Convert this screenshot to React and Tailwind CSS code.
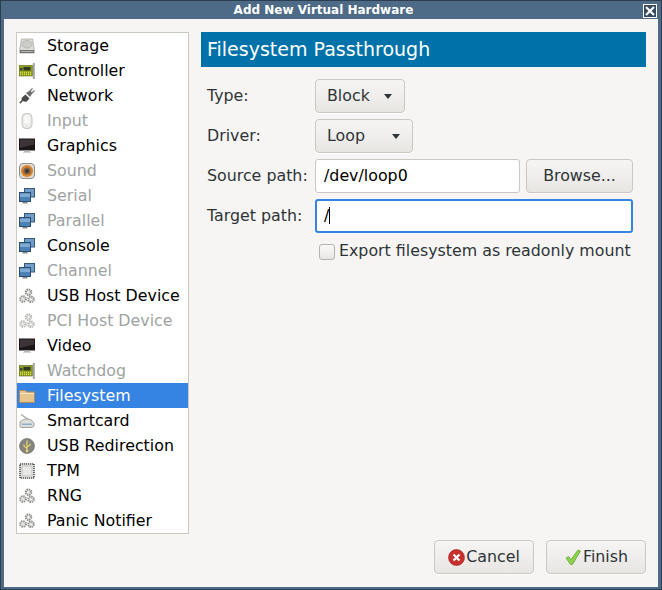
import React from 'react';

const HardDisk = () => (
  <svg width="16" height="16" viewBox="0 0 16 16">
    <path d="M2.5 1l11 0 1.8 10.5v3.5H.7v-3.5z" fill="#dcdcd9" stroke="#a8a8a5" strokeWidth="0.8" />
    <ellipse cx="8" cy="6.3" rx="5" ry="3.8" fill="#cbcbc8" stroke="#b4b4b1" strokeWidth="0.8" />
    <rect x="1" y="12" width="14" height="3" fill="#6f6f6c" />
    <rect x="2" y="13" width="12" height="1" fill="#b5b5b2" />
  </svg>
);

const Card = () => (
  <svg width="16" height="16" viewBox="0 0 16 16">
    <rect x="0" y="2.5" width="13.5" height="10.5" fill="#8b9a22" stroke="#5c6614" strokeWidth="0.6" />
    <rect x="4.5" y="4" width="7" height="3.5" fill="#2e3a20" />
    <rect x="1" y="5" width="2.5" height="2.5" fill="#3c4a3c" />
    <path d="M1 9.5h11.5M1 11.5h11.5" stroke="#dbe04a" strokeWidth="1.4" strokeDasharray="1 1" />
    <rect x="13.8" y="0" width="2" height="16" fill="#a5a5a2" />
  </svg>
);

const Plug = () => (
  <svg width="16" height="16" viewBox="0 0 16 16">
    <path d="M0.8 15.2l3-3.2" stroke="#5a5a58" strokeWidth="1.8" />
    <path d="M3 9.5l3.5-3 4 4-3 3.2q-2.5 .3-4.2-1.2t-.3-3z" fill="#4a4a48" />
    <path d="M7 5l4-2.5 2.5 2.5-2.5 4z" fill="#6a6a68" />
    <path d="M11 3l2.5-2.5M13 5l2.5-2.5" stroke="#7a7a78" strokeWidth="1.4" />
  </svg>
);

const Mouse = () => (
  <svg width="16" height="16" viewBox="0 0 16 16">
    <rect x="3" y="0.5" width="10" height="15" rx="4" fill="#ebebe8" stroke="#c4c4c1" />
    <rect x="5" y="2" width="6" height="9" rx="3" fill="#f8f8f7" />
  </svg>
);

const Monitor = () => (
  <svg width="16" height="16" viewBox="0 0 16 16">
    <rect x="0" y="0.5" width="16" height="12" fill="#1b1618" />
    <path d="M1 1.5h14v5L1 10z" fill="#3d3438" />
    <rect x="5" y="12.5" width="6" height="1.5" fill="#b5b5b2" />
    <rect x="4" y="14" width="8" height="1" fill="#d2d2cf" />
  </svg>
);

const Speaker = () => (
  <svg width="16" height="16" viewBox="0 0 16 16">
    <rect x="0.5" y="0.5" width="15" height="15" rx="3.5" fill="#dfdcd6" stroke="#8e8e8a" />
    <circle cx="8" cy="8" r="6" fill="#d8802a" />
    <circle cx="8" cy="8" r="3.6" fill="#75614c" />
    <circle cx="8" cy="8" r="1.7" fill="#3a3028" />
  </svg>
);

const Computers = () => (
  <svg width="16" height="16" viewBox="0 0 16 16">
    <rect x="5.5" y="0.5" width="10" height="8.5" fill="#6f9cc8" stroke="#38587a" />
    <rect x="0.5" y="4.5" width="11" height="9" fill="#4a82b8" stroke="#2c4d70" />
    <path d="M1 5.5h10v3.5H1z" fill="#7faad2" />
    <rect x="3.5" y="14" width="5" height="1.5" fill="#8a8a88" />
  </svg>
);

const Gears = ({ faint }) => {
  const tone = faint ? '#b5b5b2' : '#8e8e8b';
  const gear = (cx, cy, key) => (
    <g key={key}>
      <circle cx={cx} cy={cy} r="2.7" fill="none" stroke={tone} strokeWidth="2.2" strokeDasharray="1.4 0.7" />
      <circle cx={cx} cy={cy} r="1.3" fill="#fff" stroke="#c0c0bd" strokeWidth="0.6" />
    </g>
  );
  return (
    <svg width="16" height="16" viewBox="0 0 16 16">
      {gear(9.5, 4.2, 'a')}
      {gear(4, 11, 'b')}
      {gear(12, 11.3, 'c')}
    </svg>
  );
};

const Folder = () => (
  <svg width="16" height="16" viewBox="0 0 16 16">
    <path d="M0.5 3.5V2.5h6l1 1.5h8v10.5H0.5z" fill="#e8c48e" stroke="#ab8a5c" />
    <rect x="1" y="5" width="14" height="1" fill="#f8e8c8" />
  </svg>
);

const Scanner = () => (
  <svg width="16" height="16" viewBox="0 0 16 16">
    <path d="M2 1.5l9 6" stroke="#a5a5a2" strokeWidth="1.2" />
    <path d="M1 9q5-5 11-2l3 3v3q-1 1.5-3 1.5H3q-2 0-2-1.5z" fill="#dededb" stroke="#a0a09d" />
    <rect x="3" y="10.5" width="10" height="1.5" fill="#8fb0cc" />
  </svg>
);

const UsbDisc = () => (
  <svg width="16" height="16" viewBox="0 0 16 16">
    <circle cx="8" cy="8" r="7.5" fill="#85857f" stroke="#66665f" strokeWidth="0.6" />
    <path d="M8 2.5v11M8 10.5L5 8V6.5M8 9l3-2V5.5" fill="none" stroke="#ecd26a" strokeWidth="1.2" />
    <circle cx="8" cy="13" r="1.3" fill="#ecd26a" />
  </svg>
);

const Chip = () => (
  <svg width="16" height="16" viewBox="0 0 16 16">
    <rect x="1" y="1" width="14" height="14" fill="none" stroke="#4f4f4d" strokeWidth="1.6" strokeDasharray="1.3 0.7" />
    <rect x="2" y="2" width="12" height="12" rx="1" fill="#d4d4d1" />
    <rect x="4" y="4" width="8" height="8" fill="#e8e8e6" />
  </svg>
);

const devices = [
  { name: 'Storage', icon: <HardDisk /> },
  { name: 'Controller', icon: <Card /> },
  { name: 'Network', icon: <Plug /> },
  { name: 'Input', icon: <Mouse />, off: true },
  { name: 'Graphics', icon: <Monitor /> },
  { name: 'Sound', icon: <Speaker />, off: true },
  { name: 'Serial', icon: <Computers />, off: true },
  { name: 'Parallel', icon: <Computers />, off: true },
  { name: 'Console', icon: <Computers /> },
  { name: 'Channel', icon: <Computers />, off: true },
  { name: 'USB Host Device', icon: <Gears /> },
  { name: 'PCI Host Device', icon: <Gears faint />, off: true },
  { name: 'Video', icon: <Monitor /> },
  { name: 'Watchdog', icon: <Card />, off: true },
  { name: 'Filesystem', icon: <Folder />, selected: true },
  { name: 'Smartcard', icon: <Scanner /> },
  { name: 'USB Redirection', icon: <UsbDisc /> },
  { name: 'TPM', icon: <Chip /> },
  { name: 'RNG', icon: <Gears /> },
  { name: 'Panic Notifier', icon: <Gears /> },
];

const btn = 'flex h-[34px] items-center rounded-[4px] border border-[#cdc7c2] bg-gradient-to-b from-[#f6f5f4] to-[#e8e6e3] pb-[2px] text-[#2e3436] shadow-[0_1px_0_#fff]';

const Combo = ({ label, width }) => (
  <div className={`${btn} ${width} justify-between pl-[11px] pr-[12px]`}>
    <span>{label}</span>
    <span className="mt-[2px] h-0 w-0 border-x-[4.5px] border-t-[5px] border-x-transparent border-t-[#2e3436]" />
  </div>
);

const Label = ({ children }) => <div className="w-[114px] shrink-0 pb-[2px] pl-[6px] text-[#2e3436]">{children}</div>;

export default function App() {
  return (
    <div className="flex h-[590px] w-[662px] flex-col border-x border-[#2c3e50] bg-[#4d6a87] font-['DejaVu_Sans',sans-serif] text-[15.84px] leading-[17px]">
      <div className="relative h-[19px] shrink-0 border-t border-[#2c3e50] pr-[15px] pt-[1px] text-center text-[12px] font-bold leading-[16px] text-white">
        Add New Virtual Hardware
        <svg className="absolute right-[4px] top-[3px]" width="14" height="14" viewBox="0 0 14 14">
          <rect x="0.5" y="0.5" width="13" height="13" fill="#344a60" stroke="#fff" />
          <path d="M3 3l8 8M11 3l-8 8" stroke="#fff" strokeWidth="2.2" />
        </svg>
      </div>
      <div className="mx-[3px] flex min-h-0 flex-1 flex-col bg-[#f6f5f4] px-[12px] pb-[13px] pt-[13px]">
        <div className="flex flex-1 gap-[12px]">
          <div className="w-[173px] shrink-0 border border-[#cdc7c2] bg-white">
            {devices.map((d) => (
              <div
                key={d.name}
                className={`flex h-[25px] items-center gap-[12px] pl-[2px] ${d.selected ? 'bg-[#3584e4] text-white' : d.off ? 'text-[#a0a3a3]' : 'text-black'}`}
              >
                <span className="h-4 w-4 shrink-0">{d.icon}</span>
                <span>{d.name}</span>
              </div>
            ))}
          </div>
          <div className="min-w-0 flex-1">
            <div className="flex h-[35px] items-center bg-[#0072aa] pb-[1px] pl-[6px] text-[19px] text-white">Filesystem Passthrough</div>
            <div className="mt-[12px] flex flex-col gap-[6px] pr-[13px]">
              <div className="flex items-center">
                <Label>Type:</Label>
                <Combo label="Block" width="w-[90px]" />
              </div>
              <div className="flex items-center">
                <Label>Driver:</Label>
                <Combo label="Loop" width="w-[98px]" />
              </div>
              <div className="flex items-center">
                <Label>Source path:</Label>
                <div className="flex h-[34px] w-[205px] items-center rounded-[3px] border border-[#cdc7c2] bg-white pb-[2px] pl-[8px] text-black">/dev/loop0</div>
                <div className={`${btn} ml-[6px] flex-1 justify-center`}>Browse...</div>
              </div>
              <div className="flex items-center">
                <Label>Target path:</Label>
                <div className="flex h-[34px] flex-1 items-center rounded-[3px] border-2 border-[#3584e4] bg-white pb-[2px] pl-[7px] text-black">
                  /<span className="h-[17px] w-px bg-black" />
                </div>
              </div>
              <div className="mt-[3px] flex items-center whitespace-nowrap pl-[118px] text-[#2e3436]">
                <span className="mr-[4px] h-4 w-4 shrink-0 rounded-[3px] border border-[#b8b3ae] bg-gradient-to-b from-[#fafafa] to-[#e8e6e3]" />
                <span className="pb-[2px]">Export filesystem as readonly mount</span>
              </div>
            </div>
          </div>
        </div>
        <div className="mt-[6px] flex justify-end gap-[12px]">
          <div className={`${btn} w-[100px] justify-center gap-[1px]`}>
            <svg className="mt-[2px]" width="17" height="17" viewBox="0 0 16 16">
              <circle cx="8" cy="8" r="7.5" fill="#c9302c" stroke="#9e1f1f" strokeWidth="0.6" />
              <path d="M5.2 5.2l5.6 5.6M10.8 5.2l-5.6 5.6" stroke="#fff" strokeWidth="2" />
            </svg>
            <span>Cancel</span>
          </div>
          <div className={`${btn} w-[100px] justify-center gap-[1px]`}>
            <svg className="mt-[2px]" width="18" height="18" viewBox="0 0 18 18">
              <path d="M2 10l2.5-1.5 2.5 3L14 2l2.5 1-8 13.5h-2z" fill="#8fd14f" stroke="#5c9e2a" strokeWidth="0.7" />
            </svg>
            <span>Finish</span>
          </div>
        </div>
      </div>
      <div className="h-[3px] shrink-0 border-b border-[#2c3e50]" />
    </div>
  );
}
